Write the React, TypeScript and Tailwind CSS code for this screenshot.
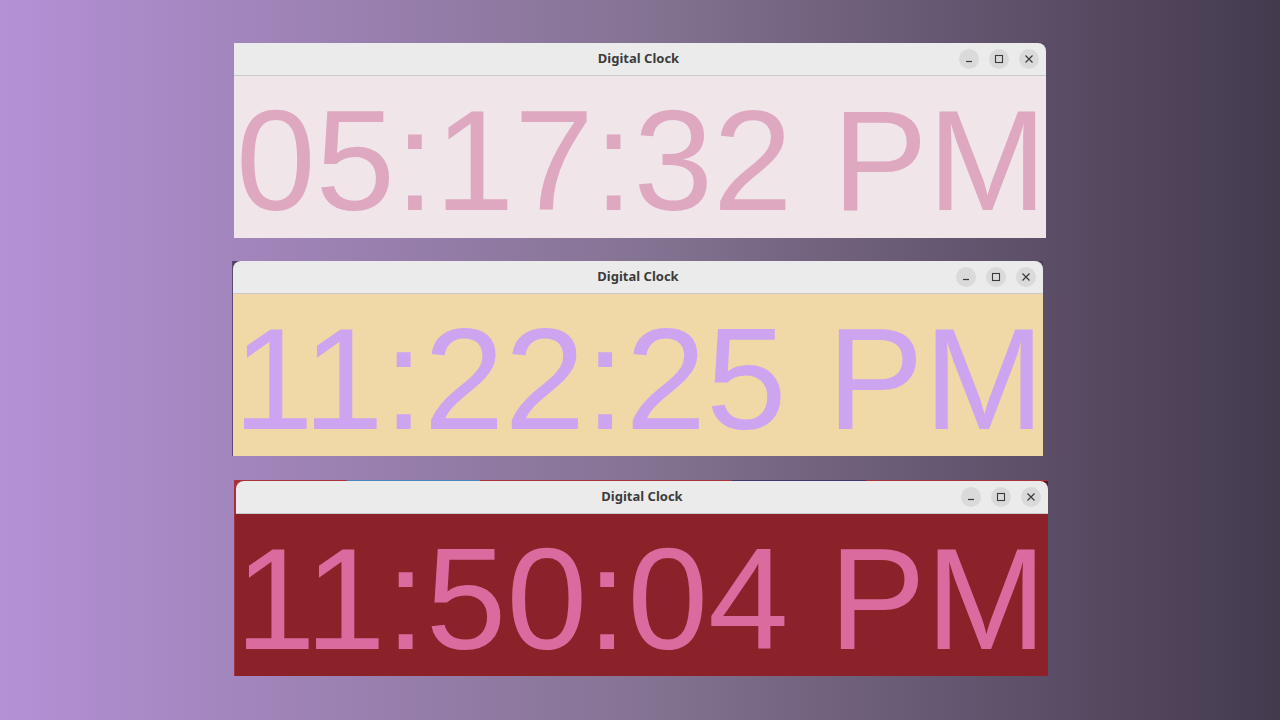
import React from 'react';

type Clock = {
  time: string;
  bg: string;
  fg: string;
  size: string;
};

function WindowButtons() {
  return (
    <div className="absolute right-[7px] top-1/2 flex -translate-y-1/2 items-center gap-[10px]">
      <span className="flex h-5 w-5 items-center justify-center rounded-full bg-[#dadada]">
        <svg width="10" height="10" viewBox="0 0 10 10">
          <path d="M2 7.5h6" stroke="#3a3a3a" strokeWidth="1.2" />
        </svg>
      </span>
      <span className="flex h-5 w-5 items-center justify-center rounded-full bg-[#dadada]">
        <svg width="10" height="10" viewBox="0 0 10 10">
          <rect x="1.5" y="1.5" width="7" height="7" fill="none" stroke="#3a3a3a" strokeWidth="1.1" />
        </svg>
      </span>
      <span className="flex h-5 w-5 items-center justify-center rounded-full bg-[#dadada]">
        <svg width="10" height="10" viewBox="0 0 10 10">
          <path d="M1.5 1.5l7 7M8.5 1.5l-7 7" stroke="#3a3a3a" strokeWidth="1.2" />
        </svg>
      </span>
    </div>
  );
}

function TitleBar({ rounded, shift = '' }: { rounded: string; shift?: string }) {
  return (
    <div
      className={`relative flex h-[33px] items-center justify-center border-b border-[#c9c9c9] bg-[#ebebeb] ${rounded}`}
    >
      <span className={`font-['Noto_Sans',sans-serif] text-[13px] font-bold text-[#3c3c3c] ${shift}`}>Digital Clock</span>
      <WindowButtons />
    </div>
  );
}

function ClockFace({ clock, pad }: { clock: Clock; pad: string }) {
  return (
    <div
      className={`h-[162px] overflow-hidden whitespace-nowrap ${pad}`}
      style={{ backgroundColor: clock.bg, color: clock.fg }}
    >
      <div className={`pt-[13px] font-['Liberation_Sans',Arial,sans-serif] leading-none ${clock.size}`}>{clock.time}</div>
    </div>
  );
}

export default function App() {
  const clocks: Clock[] = [
    { time: '05:17:32 PM', bg: '#f0e6ea', fg: '#dea8c0', size: 'text-[143px]' },
    { time: '11:22:25 PM', bg: '#f1d9a7', fg: '#cda4ef', size: 'text-[145px]' },
    { time: '11:50:04 PM', bg: '#8b2129', fg: '#d96b9e', size: 'text-[145px]' },
  ];

  return (
    <div className="flex h-[720px] w-[1280px] flex-col overflow-hidden bg-gradient-to-r from-[#b590d6] via-[#857393] to-[#443a4e] pt-[43px]">
      {/* window 1 */}
      <div className="ml-[234px] w-[812px] bg-[linear-gradient(to_right,#8a6aa0_1%,transparent_1%,transparent_99%,#5a4a66_99%)]">
        <TitleBar rounded="rounded-tr-lg" shift="-ml-[3px]" />
        <ClockFace clock={clocks[0]} pad="pl-[2px]" />
      </div>

      {/* window 2 */}
      <div className="ml-[232px] mt-[23px] w-[811px] border-l border-[#5d4a72] bg-[linear-gradient(to_right,#4f4068_2%,transparent_2%,transparent_98%,#4a3f58_98%)]">
        <TitleBar rounded="rounded-t-lg" />
        <ClockFace clock={clocks[1]} pad="pl-0" />
      </div>

      {/* window 3 */}
      <div className="ml-[234px] mt-[24px] w-[814px]">
        <div className="flex h-px">
          <div className="w-[113px] bg-[#a9333c]" />
          <div className="w-[133px] bg-[#4a86bd]" />
          <div className="w-[252px] bg-[#a9333c]" />
          <div className="w-[134px] bg-[#3b3a6a]" />
          <div className="flex-1 bg-[#a9333c]" />
        </div>
        <div className="bg-[linear-gradient(to_right,#a92f38_98%,#5c1820_98%)] pl-[2px]">
          <TitleBar rounded="rounded-t-lg" />
        </div>
        <div className="border-l border-[#a3323a]">
          <ClockFace clock={clocks[2]} pad="pl-0" />
        </div>
      </div>
    </div>
  );
}
